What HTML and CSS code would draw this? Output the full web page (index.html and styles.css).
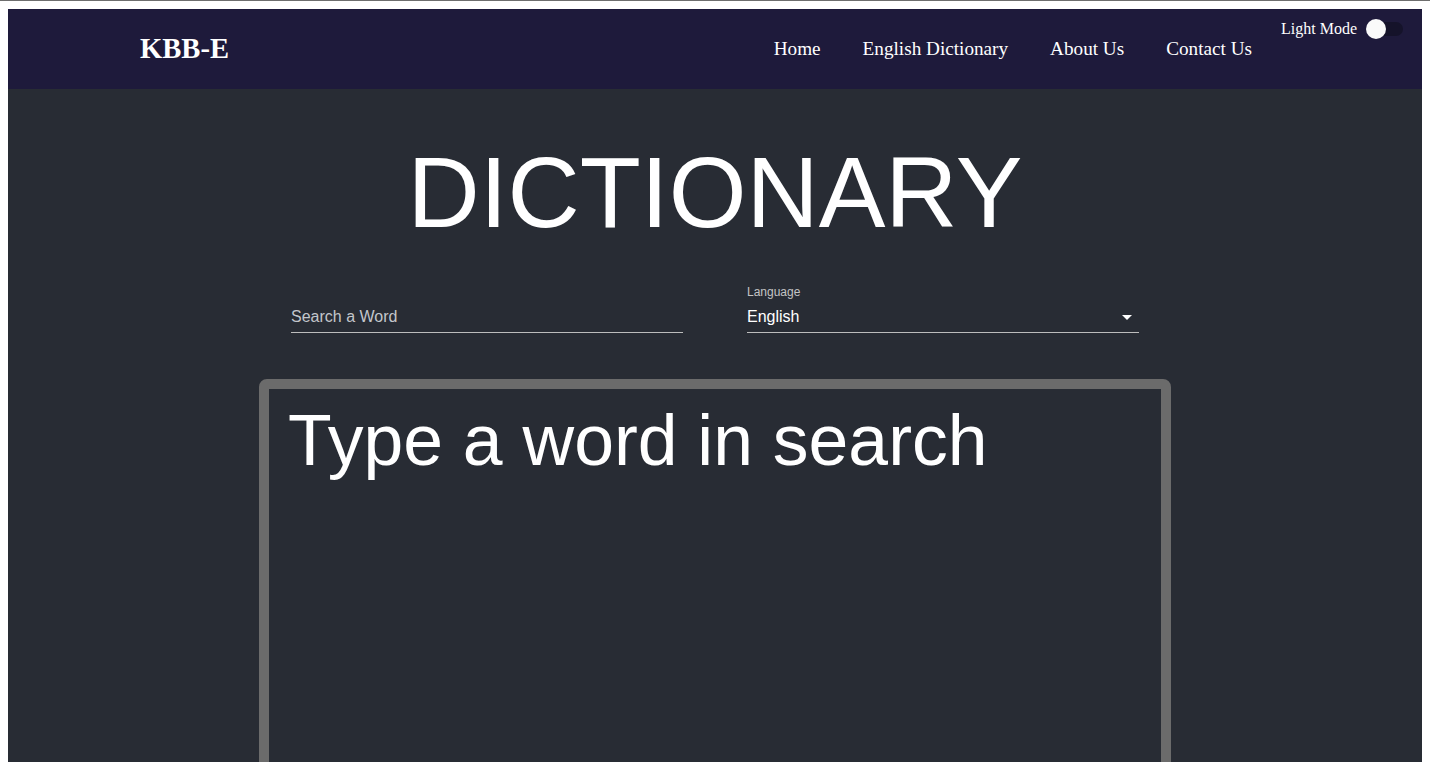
FILE: index.html
```html
<!DOCTYPE html>
<html lang="en">
<head>
<meta charset="utf-8">
<title>KBB-E Dictionary</title>
<link rel="stylesheet" href="styles.css">
</head>
<body>
<div class="app">
  <nav class="navbar">
    <div class="brand">KBB-E</div>
    <ul class="links">
      <li>Home</li>
      <li>English Dictionary</li>
      <li>About Us</li>
      <li>Contact Us</li>
    </ul>
    <div class="mode">
      <span class="mode-label">Light Mode</span>
      <span class="switch"><span class="track"></span><span class="thumb"></span></span>
    </div>
  </nav>
  <main class="main">
    <h1 class="title">DICTIONARY</h1>
    <div class="controls">
      <div class="field">
        <div class="input"><span class="placeholder">Search a Word</span></div>
      </div>
      <div class="field">
        <label class="label">Language</label>
        <div class="input select"><span class="value">English</span>
          <svg class="caret" width="10" height="5" viewBox="0 0 10 5"><path d="M0 0h10L5 5z" fill="#fff"/></svg>
        </div>
      </div>
    </div>
    <section class="result">
      <p class="hint">Type a word in search</p>
    </section>
  </main>
</div>
</body>
</html>
```
FILE: styles.css
```css
html {
  border-top: 1px solid #6e6e6e;
  background: #fff;
}
body {
  margin: 8px;
  background: #fff;
  overflow: hidden;
}
.app {
  background: #282c34;
  min-height: 900px;
}
.navbar {
  height: 80px;
  background: #1e1a3b;
  display: flex;
  align-items: center;
  padding: 0 19px 0 132px;
  font-family: "Liberation Serif", "Times New Roman", serif;
  color: #fff;
}
.brand {
  font-size: 28.6px;
  font-weight: bold;
  margin-top: -1px;
}
.links {
  list-style: none;
  display: flex;
  gap: 42px;
  margin: 0 0 0 auto;
  padding: 0;
  font-size: 19.2px;
}
.mode {
  align-self: flex-start;
  margin-top: 10px;
  margin-left: 29px;
  display: flex;
  align-items: center;
  gap: 9px;
}
.mode-label {
  font-size: 16px;
}
.switch {
  position: relative;
  width: 37px;
  height: 20px;
  display: block;
}
.track {
  position: absolute;
  left: 3px;
  top: 3px;
  width: 34px;
  height: 14px;
  border-radius: 7px;
  background: #15132a;
}
.thumb {
  position: absolute;
  left: 0;
  top: 0;
  width: 20px;
  height: 20px;
  border-radius: 50%;
  background: #fafafa;
}
.main {
  display: flex;
  flex-direction: column;
  align-items: center;
  font-family: "Liberation Sans", Arial, sans-serif;
  color: #fff;
}
.title {
  margin: 46px 0 0;
  font-size: 100px;
  line-height: 115px;
  font-weight: normal;
}
.controls {
  display: flex;
  gap: 64px;
  margin-top: 35px;
}
.field {
  width: 392px;
  height: 48px;
  position: relative;
  display: flex;
  flex-direction: column;
  justify-content: flex-end;
}
.label {
  position: absolute;
  top: 0;
  left: 0;
  font-size: 12px;
  color: #c4c4c4;
}
.input {
  height: 32px;
  box-sizing: border-box;
  border-bottom: 1px solid #bdbdbd;
  display: flex;
  align-items: center;
  padding-top: 1px;
  font-size: 16px;
}
.placeholder {
  color: #c3c6cb;
}
.select {
  justify-content: space-between;
}
.caret {
  margin-right: 7px;
}
.result {
  margin-top: 46px;
  width: 912px;
  height: 520px;
  box-sizing: border-box;
  border: 10px solid #6b6b6b;
  border-radius: 8px;
  padding: 10px 18px 10px 19px;
}
.hint {
  margin: 0;
  font-size: 71.5px;
  line-height: normal;
}
```
